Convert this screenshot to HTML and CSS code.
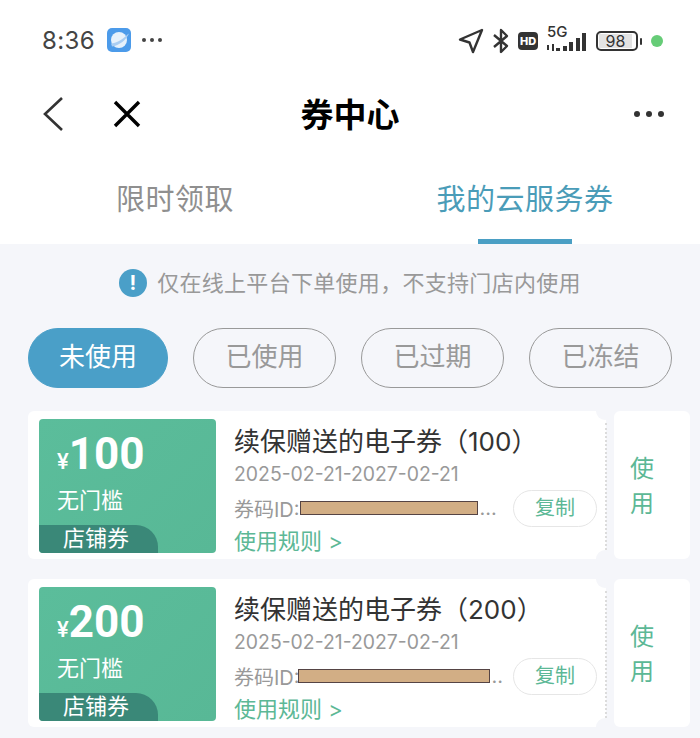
FILE: index.html
```html
<!DOCTYPE html>
<html lang="zh-CN">
<head>
    <meta charset="UTF-8">
    <meta name="viewport" content="width=device-width, initial-scale=1.0">
    <title>券中心</title>
    <link rel="stylesheet" href="styles.css">
</head>
<body>

    <!-- Status bar -->
    <div class="status-bar">
        <div class="status-left">
            <span class="clock">8:36</span>
            <svg class="app-icon" width="24" height="24" viewBox="0 0 24 24">
                <rect width="24" height="24" rx="5" fill="#4c9bea"/>
                <circle cx="12" cy="12" r="8" fill="#e6f1fb"/>
                <path d="M4 15.5C9 15 15 12 20.5 6.5L22 5.5C20 11 12 18 5 18.5Z" fill="#a9cdf2"/>
            </svg>
            <span class="status-more">
                <i></i><i></i><i></i>
            </span>
        </div>
        <div class="status-right">
            <svg width="26" height="26" viewBox="0 0 26 26" fill="none" stroke="#333" stroke-width="2.4" stroke-linejoin="round">
                <path d="M24 2L2 11.5L11.5 14.5L15 24Z"/>
            </svg>
            <svg width="18" height="26" viewBox="0 0 18 26" fill="none" stroke="#333" stroke-width="2.4" stroke-linejoin="round">
                <path d="M2 7L15 18L9 24V2L15 8L2 19"/>
            </svg>
            <span class="hd">HD</span>
            <div class="signal">
                <span class="five-g">5G</span>
                <div class="bars">
                    <i class="b1"></i><i class="b2"></i><i class="b3"></i><i class="b4"></i><i class="b5"></i><i class="b6"></i><i class="b7"></i>
                </div>
            </div>
            <div class="battery">
                <span class="battery-body"><span class="battery-level">98</span></span>
                <span class="battery-cap"></span>
            </div>
            <span class="green-dot"></span>
        </div>
    </div>

    <!-- Title bar -->
    <div class="nav-bar">
        <div class="nav-left">
            <svg width="22" height="36" viewBox="0 0 22 36" fill="none" stroke="#333" stroke-width="2.6">
                <path d="M20 2L3 18L20 34"/>
            </svg>
            <svg width="28" height="28" viewBox="0 0 28 28" fill="none" stroke="#000" stroke-width="3.4">
                <path d="M2 2L26 26M26 2L2 26"/>
            </svg>
        </div>
        <h1>券中心</h1>
        <div class="nav-more"><i></i><i></i><i></i></div>
    </div>

    <!-- Tabs -->
    <div class="tabs">
        <div class="tab">限时领取</div>
        <div class="tab active">我的云服务券</div>
    </div>

    <div class="content">
        <div class="tip">
            <span class="tip-icon">!</span>
            <span>仅在线上平台下单使用，不支持门店内使用</span>
        </div>

        <div class="filters">
            <div class="pill selected">未使用</div>
            <div class="pill">已使用</div>
            <div class="pill">已过期</div>
            <div class="pill">已冻结</div>
        </div>

        <div class="coupon">
            <div class="coupon-main">
                <span class="divider"></span>
                <div class="face">
                    <div class="amount"><span class="yen">¥</span>100</div>
                    <div class="threshold">无门槛</div>
                    <div class="shop-tag">店铺券</div>
                </div>
                <div class="info">
                    <div class="name">续保赠送的电子券（100）</div>
                    <div class="dates">2025-02-21-2027-02-21</div>
                    <div class="code-row">
                        <div class="code">券码ID:<span class="mask mask-a"></span><span class="dots">...</span></div>
                        <div class="copy">复制</div>
                    </div>
                    <div class="rules">使用规则 &gt;</div>
                </div>
            </div>
            <div class="coupon-use">使<br>用</div>
        </div>

        <div class="coupon">
            <div class="coupon-main">
                <span class="divider"></span>
                <div class="face">
                    <div class="amount"><span class="yen">¥</span>200</div>
                    <div class="threshold">无门槛</div>
                    <div class="shop-tag">店铺券</div>
                </div>
                <div class="info">
                    <div class="name">续保赠送的电子券（200）</div>
                    <div class="dates">2025-02-21-2027-02-21</div>
                    <div class="code-row">
                        <div class="code">券码ID:<span class="mask mask-b"></span><span class="dots">..</span></div>
                        <div class="copy">复制</div>
                    </div>
                    <div class="rules">使用规则 &gt;</div>
                </div>
            </div>
            <div class="coupon-use">使<br>用</div>
        </div>
    </div>

</body>
</html>
```

FILE: styles.css
```css
* {
    box-sizing: border-box;
}

html, body {
    height: 100%;
}

body {
    margin: 0;
    height: 738px;
    overflow: hidden;
    background-color: #fff;
    color: #333;
    font-family: "Inter", "Noto Sans CJK SC", sans-serif;
}

/* Status bar */
.status-bar {
    height: 82px;
    padding: 0 37px 2px 42px;
    display: flex;
    justify-content: space-between;
    align-items: center;
}

.status-left {
    display: flex;
    align-items: center;
}

.clock {
    font-size: 24px;
    color: #444;
    letter-spacing: 0.4px;
}

.app-icon {
    margin-left: 12px;
}

.status-more {
    margin-left: 11px;
    display: flex;
    gap: 4px;
}

.status-more i {
    width: 4px;
    height: 4px;
    border-radius: 50%;
    background-color: #444;
}

.status-right {
    display: flex;
    align-items: center;
    margin-top: 2px;
}

.status-right svg:nth-child(2) {
    margin-left: 8px;
}

.hd {
    margin-left: 8px;
    width: 20px;
    height: 18px;
    border-radius: 4px;
    background-color: #333;
    color: #fff;
    font-size: 11px;
    font-weight: 800;
    line-height: 18px;
    text-align: center;
}

.signal {
    margin-left: 9px;
    width: 40px;
    height: 24px;
    position: relative;
}

.five-g {
    position: absolute;
    left: 0;
    top: -7px;
    font-size: 15px;
    font-weight: 500;
    color: #333;
}

.bars {
    position: absolute;
    left: 0;
    bottom: 2px;
    display: flex;
    align-items: flex-end;
    gap: 2.5px;
}

.bars i {
    width: 4px;
    background-color: #333;
}

.bars .b1 { height: 5px; width: 2px; margin-bottom: 1px; }
.bars .b2 { height: 7px; width: 2px; }
.bars .b3 { height: 3px; }
.bars .b4 { height: 5px; }
.bars .b5 { height: 9px; }
.bars .b6 { height: 13px; }
.bars .b7 { height: 18px; }

.battery {
    margin-left: 9px;
    display: flex;
    align-items: center;
}

.battery-body {
    width: 42px;
    height: 20px;
    border: 2px solid #333;
    border-radius: 5px;
    padding: 1px;
    display: block;
}

.battery-level {
    display: block;
    height: 14px;
    width: 33px;
    background-color: #e3e3e3;
    font-size: 16px;
    line-height: 14px;
    text-align: center;
    color: #333;
}

.battery-cap {
    width: 2px;
    height: 7px;
    margin-left: 2px;
    background-color: #333;
    border-radius: 1px;
}

.green-dot {
    margin-left: 9px;
    width: 12px;
    height: 12px;
    border-radius: 50%;
    background-color: #66cc77;
}

/* Title bar */
.nav-bar {
    height: 64px;
    padding: 0 36px 0 42px;
    display: flex;
    justify-content: space-between;
    align-items: center;
    position: relative;
}

.nav-left {
    display: flex;
    align-items: center;
    gap: 49px;
}

.nav-bar h1 {
    margin: -3px 0 0;
    position: absolute;
    left: 0;
    right: 0;
    text-align: center;
    font-size: 33px;
    font-weight: 700;
    color: #000;
    pointer-events: none;
}

.nav-more {
    display: flex;
    gap: 6px;
}

.nav-more i {
    width: 6px;
    height: 6px;
    border-radius: 50%;
    background-color: #333;
}

/* Tabs */
.tabs {
    height: 98px;
    display: flex;
    padding-top: 29px;
}

.tab {
    flex: 1;
    text-align: center;
    font-size: 29px;
    line-height: 50px;
    color: #8f8f8f;
    letter-spacing: 0.5px;
    position: relative;
}

.tab.active {
    color: #4a9cb8;
}

.tab.active::after {
    content: "";
    position: absolute;
    left: 128px;
    bottom: 0;
    width: 94px;
    height: 5px;
    background-color: #4a9fc4;
}

/* Content */
.content {
    height: 494px;
    background-color: #f5f6fa;
    padding: 0 10px 0 28px;
}

.tip {
    height: 84px;
    padding-bottom: 6px;
    display: flex;
    align-items: center;
    justify-content: center;
    padding-right: 18px;
    gap: 10px;
    font-size: 22px;
    letter-spacing: 0.3px;
    color: #999;
}

.tip-icon {
    width: 28px;
    height: 28px;
    border-radius: 50%;
    background-color: #4a9fc8;
    color: #fff;
    font-size: 20px;
    font-weight: 700;
    line-height: 28px;
    text-align: center;
}

.tip span:last-child {
    margin-top: -4px;
}

.filters {
    display: flex;
    gap: 25px;
    margin-bottom: 23px;
}

.pill {
    width: 143px;
    height: 60px;
    border: 1px solid #999;
    border-radius: 30px;
    font-size: 26px;
    line-height: 56px;
    text-align: center;
    color: #999;
}

.pill.selected {
    width: 140px;
    border-color: #4a9fc8;
    background-color: #4a9fc8;
    color: #fff;
}

/* Coupon cards */
.coupon {
    display: flex;
    height: 148px;
    margin-bottom: 20px;
}

.coupon-main {
    width: 578px;
    padding: 8px 0 6px 11px;
    display: flex;
    background-color: #fff;
    border-radius: 6px;
    position: relative;
}

/* notches at the ends of the divider */
.coupon-main::before,
.coupon-main::after {
    content: "";
    position: absolute;
    right: -8px;
    width: 18px;
    height: 18px;
    border-radius: 50%;
    background-color: #f5f6fa;
}

.coupon-main::before {
    top: -9px;
}

.coupon-main::after {
    bottom: -9px;
}

.divider {
    position: absolute;
    top: 12px;
    bottom: 9px;
    right: -1px;
    border-right: 2px dotted #dcdcdc;
}

.coupon-use {
    width: 76px;
    margin-left: 8px;
    padding-top: 2px;
    padding-right: 20px;
    background-color: #fff;
    border-radius: 6px;
    color: #5cb896;
    font-size: 24px;
    line-height: 35px;
    display: flex;
    align-items: center;
    justify-content: center;
    text-align: center;
}

.face {
    width: 177px;
    height: 134px;
    border-radius: 4px;
    background: linear-gradient(135deg, #5bbd9b, #58b896);
    color: #fff;
    padding: 8px 0 0 18px;
    position: relative;
    overflow: hidden;
}

.amount {
    font-size: 44px;
    font-weight: 700;
    line-height: 54px;
    font-family: "Roboto", sans-serif;
}

.yen {
    font-size: 22px;
    font-weight: 500;
}

.threshold {
    margin-top: -3px;
    font-size: 22px;
    line-height: 28px;
}

.shop-tag {
    position: absolute;
    left: 0;
    bottom: 0;
    width: 119px;
    height: 28px;
    padding-left: 24px;
    background-color: #3a8878;
    border-top-right-radius: 22px;
    font-size: 22px;
    line-height: 27px;
}

.info {
    margin-left: 18px;
    flex: 1;
    min-width: 0;
}

.name {
    margin-top: 5px;
    font-size: 26px;
    line-height: 35px;
    color: #333;
}

.dates {
    font-size: 19.4px;
    line-height: 31px;
    color: #999;
}

.code-row {
    display: flex;
    align-items: center;
    justify-content: space-between;
    padding-right: 9px;
    height: 36px;
}

.code {
    display: flex;
    align-items: center;
    font-size: 20px;
    color: #999;
}

.mask {
    height: 14px;
    background-color: #d2ae85;
    border: 1px solid #544;
}

.mask-a {
    width: 178px;
}

.mask-b {
    width: 192px;
    margin-left: -2px;
}

.dots {
    margin-left: 2px;
}

.copy {
    width: 84px;
    height: 37px;
    border: 1px solid #e6e6e6;
    border-radius: 19px;
    font-size: 20px;
    line-height: 35px;
    text-align: center;
    color: #5cb896;
}

.rules {
    margin-top: 2px;
    font-size: 22px;
    line-height: 26px;
    color: #5cb896;
}
```
